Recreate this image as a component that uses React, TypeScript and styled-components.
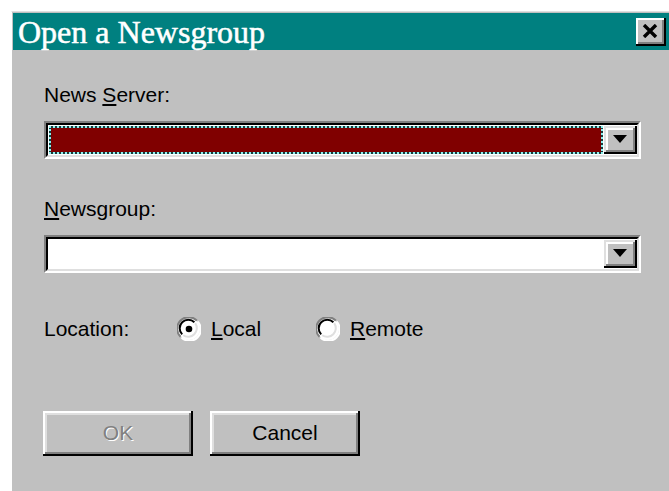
import React from "react";
import styled, { createGlobalStyle } from "styled-components";

const Global = createGlobalStyle`
  html, body {
    margin: 0;
    padding: 0;
    background: #ffffff;
    overflow: hidden;
  }
  body {
    width: 669px;
    height: 491px;
  }
`;

const Window = styled.div`
  margin: 11px 0 0 11px;
  width: 664px;
  height: 490px;
  box-sizing: border-box;
  background: #c0c0c0;
  border-top: 1px solid #dfdfdf;
  border-left: 1px solid #ffffff;
  padding: 1px 0 0 1px;
  display: flex;
  flex-direction: column;
  font-family: "Liberation Sans", Arial, sans-serif;
  color: #000;
`;

const TitleBar = styled.div`
  height: 37px;
  background: #008080;
  display: flex;
  align-items: center;
  justify-content: space-between;
  padding: 0 9px 0 5px;
`;

const TitleText = styled.span`
  font-family: "Liberation Serif", "Times New Roman", serif;
  font-weight: normal;
  font-size: 32px;
  line-height: 34px;
  color: #ffffff;
  -webkit-text-stroke: 0.5px #ffffff;
  margin-top: 1px;
`;

const CloseButton = styled.div`
  width: 30px;
  height: 28px;
  box-sizing: border-box;
  background: #c0c0c0;
  box-shadow: inset -2px -2px 0 #000, inset 2px 2px 0 #fff, inset -4px -4px 0 #808080;
  display: flex;
  align-items: center;
  justify-content: center;
  padding: 0 2px 2px 0;
`;

const Body = styled.div`
  display: flex;
  flex-direction: column;
  padding: 33px 0 0 31px;
  width: 597px;
`;

const Label = styled.div`
  font-size: 21px;
  line-height: 24px;
  height: 24px;
  margin-bottom: 14px;
`;

const Key = styled.span`
  text-decoration: underline;
  text-underline-offset: 2px;
`;

const Combo = styled.div<{ $after?: number }>`
  height: 38px;
  box-sizing: border-box;
  background: #ffffff;
  border-top: 2px solid #808080;
  border-left: 2px solid #808080;
  border-right: 2px solid #ffffff;
  border-bottom: 2px solid #ffffff;
  margin-bottom: ${(p) => p.$after ?? 0}px;
  display: flex;
`;

const ComboInner = styled.div`
  flex: 1;
  display: flex;
  border-top: 2px solid #000;
  border-left: 2px solid #000;
  border-right: 2px solid #dfdfdf;
  border-bottom: 2px solid #dfdfdf;
  padding: 1px 0 1px 1px;
  box-sizing: border-box;
  background: #ffffff;
`;

const FieldArea = styled.div`
  flex: 1;
  background: #ffffff;
`;

/* Selected entry: dark red fill framed by the dotted focus rectangle */
const SelectedField = styled.div`
  flex: 1;
  background: #1a3a3a;
  display: flex;
`;

const SelectedFill = styled.div`
  flex: 1;
  background: #800000;
  background-clip: padding-box;
  border: 2px dotted #8ff0f0;
`;

const DropButton = styled.div`
  width: 33px;
  box-sizing: border-box;
  background: #c0c0c0;
  box-shadow: inset -2px -2px 0 #000, inset 2px 2px 0 #dfdfdf, inset -4px -4px 0 #808080, inset 4px 4px 0 #fff;
  display: flex;
  align-items: center;
  justify-content: center;
  padding: 0 2px 2px 0;
  margin-left: 1px;
`;

const LocationRow = styled.div`
  display: flex;
  align-items: center;
  height: 30px;
  margin-top: 41px;
  font-size: 21px;
`;

const LocationLabel = styled.span`
  width: 133px;
`;

const RadioOption = styled.label<{ $width: number }>`
  display: flex;
  align-items: center;
  gap: 10px;
  width: ${(p) => p.$width}px;
`;

const ButtonRow = styled.div`
  display: flex;
  gap: 17px;
  margin-top: 67px;
  margin-left: -1px;
`;

const PushButton = styled.div<{ $disabled?: boolean }>`
  width: 150px;
  height: 45px;
  box-sizing: border-box;
  background: #c0c0c0;
  box-shadow: inset -2px -2px 0 #000, inset 2px 2px 0 #fff, inset -4px -4px 0 #808080, inset 4px 4px 0 #dfdfdf;
  display: flex;
  align-items: center;
  justify-content: center;
  padding-bottom: 2px;
  font-size: 21px;
  color: ${(p) => (p.$disabled ? "#808080" : "#000")};
  text-shadow: ${(p) => (p.$disabled ? "1px 1px 0 #ffffff" : "none")};
`;

const Arrow = () => (
  <svg width="14" height="8" viewBox="0 0 14 8">
    <polygon points="0,0 14,0 7,8" fill="#000" />
  </svg>
);

const CloseGlyph = () => (
  <svg width="16" height="14" viewBox="0 0 16 14">
    <path d="M2 1 L14 13 M14 1 L2 13" stroke="#000" strokeWidth="3.4" />
  </svg>
);

const Radio = ({ checked }: { checked: boolean }) => (
  <svg width="24" height="24" viewBox="0 0 24 24">
    <circle cx="12" cy="12" r="11" fill="#fff" />
    <path d="M3.5 19.8 A11 11 0 0 1 19.8 3.5" stroke="#808080" strokeWidth="2" fill="none" />
    <path d="M5.2 17.4 A8.6 8.6 0 0 1 17.4 5.2" stroke="#000" strokeWidth="2" fill="none" />
    <path d="M20.5 4.5 A11 11 0 0 1 4.5 20.5" stroke="#ffffff" strokeWidth="2" fill="none" />
    <path d="M18.2 6.2 A8.6 8.6 0 0 1 6.2 18.2" stroke="#dfdfdf" strokeWidth="2" fill="none" />
    {checked && <circle cx="12" cy="12" r="3.3" fill="#000" />}
  </svg>
);

export default function App() {
  return (
    <>
      <Global />
      <Window>
        <TitleBar>
          <TitleText>Open a Newsgroup</TitleText>
          <CloseButton>
            <CloseGlyph />
          </CloseButton>
        </TitleBar>
        <Body>
          <Label>
            News <Key>S</Key>erver:
          </Label>
          <Combo $after={38}>
            <ComboInner>
              <SelectedField>
                <SelectedFill />
              </SelectedField>
              <DropButton>
                <Arrow />
              </DropButton>
            </ComboInner>
          </Combo>
          <Label>
            <Key>N</Key>ewsgroup:
          </Label>
          <Combo>
            <ComboInner>
              <FieldArea />
              <DropButton>
                <Arrow />
              </DropButton>
            </ComboInner>
          </Combo>
          <LocationRow>
            <LocationLabel>Location:</LocationLabel>
            <RadioOption $width={139}>
              <Radio checked />
              <span>
                <Key>L</Key>ocal
              </span>
            </RadioOption>
            <RadioOption $width={140}>
              <Radio checked={false} />
              <span>
                <Key>R</Key>emote
              </span>
            </RadioOption>
          </LocationRow>
          <ButtonRow>
            <PushButton $disabled>OK</PushButton>
            <PushButton>Cancel</PushButton>
          </ButtonRow>
        </Body>
      </Window>
    </>
  );
}
